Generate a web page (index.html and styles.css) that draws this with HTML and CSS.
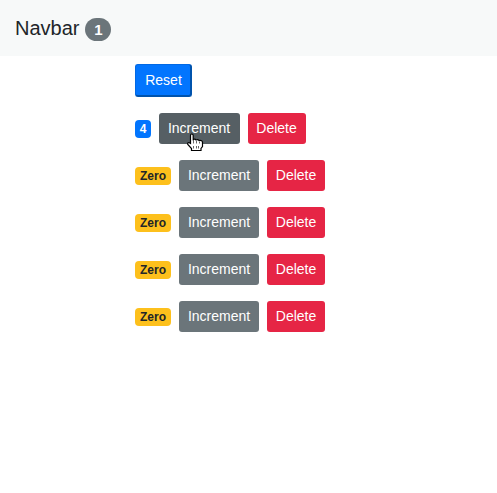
FILE: index.html
```html
<!DOCTYPE html>
<html lang="en">
<head>
<meta charset="utf-8">
<title>Counters</title>
<link rel="stylesheet" href="styles.css">
</head>
<body>
<nav class="navbar"><span class="brand">Navbar</span><span class="badge pill">1</span></nav>
<main class="counters">
<button class="btn primary">Reset</button>
<div class="row"><span class="badge blue">4</span><button class="btn secondary hover">Increment<svg class="cursor" width="17" height="20" viewBox="0 0 17 20"><path d="M3.500 11.500V3.500Q3.500 2 4.800 2T6.200 3.500V7.500Q8 6.500 9 8Q11 7 12 8.500Q15.500 8 15.500 10.500V14.500L14 16.500V18.500H4.500V16.500L.8 12.500Q.2 10.500 2 10.500Z" fill="#fff" stroke="#000" stroke-width="1.2"/><path d="M6.500 8V11.500M9.500 9V11.500M12.500 9.500V11.500M6.500 14V16.500M9.500 14V16.500M11.500 14V16.500" fill="none" stroke="#000" stroke-width=".6"/></svg></button><button class="btn danger">Delete</button></div>
<div class="row"><span class="badge yellow">Zero</span><button class="btn secondary">Increment</button><button class="btn danger">Delete</button></div>
<div class="row"><span class="badge yellow">Zero</span><button class="btn secondary">Increment</button><button class="btn danger">Delete</button></div>
<div class="row"><span class="badge yellow">Zero</span><button class="btn secondary">Increment</button><button class="btn danger">Delete</button></div>
<div class="row"><span class="badge yellow">Zero</span><button class="btn secondary">Increment</button><button class="btn danger">Delete</button></div>
</main>
</body>
</html>
```
FILE: styles.css
```css
* { box-sizing: border-box; }
body { margin: 0; background: #fff; color: #212529; font: 16px/1.5 "Liberation Sans", Arial, sans-serif; }
.navbar { display: flex; align-items: center; height: 56px; padding: 0 15px; background: #f7f9f9; }
.brand { font-size: 20px; line-height: 30px; margin-right: 6px; }
.badge { display: inline-block; padding: 3px 0; border-radius: 4px; font-size: 12px; font-weight: 700; line-height: 12px; text-align: center; }
.pill { width: 26px; padding: 4px 0; border-radius: 12px; background: #6b757a; color: #fff; font-size: 15px; line-height: 15px; margin-top: 3px; }
.blue { width: 16px; background: #0275fe; color: #fff; }
.yellow { width: 36px; background: #fdc01c; }
.counters { display: flex; flex-direction: column; align-items: flex-start; padding: 8px 0 0 135px; }
.btn { position: relative; height: 31px; padding: 0; border: 1px solid transparent; border-radius: 3px; color: #fff; font: 14px/21px "Liberation Sans", Arial, sans-serif; }
.primary { width: 57px; height: 33px; border: 2px solid; border-color: #0269e4 #0053ad #0053ad #0269e4; border-top-width: 1px; border-left-width: 1px; padding: 1px 0 0 1px; background: #0275fe; }
.row { display: flex; align-items: center; gap: 8px; height: 31px; margin-top: 16px; }
.secondary { width: 80px; background: #6b757a; }
.hover { width: 81px; padding-right: 1px; background: #565f64; }
.danger { width: 58px; background: #e62545; }
.hover + .danger { padding-right: 1px; }
.cursor { position: absolute; left: 27px; top: 18px; }
```
